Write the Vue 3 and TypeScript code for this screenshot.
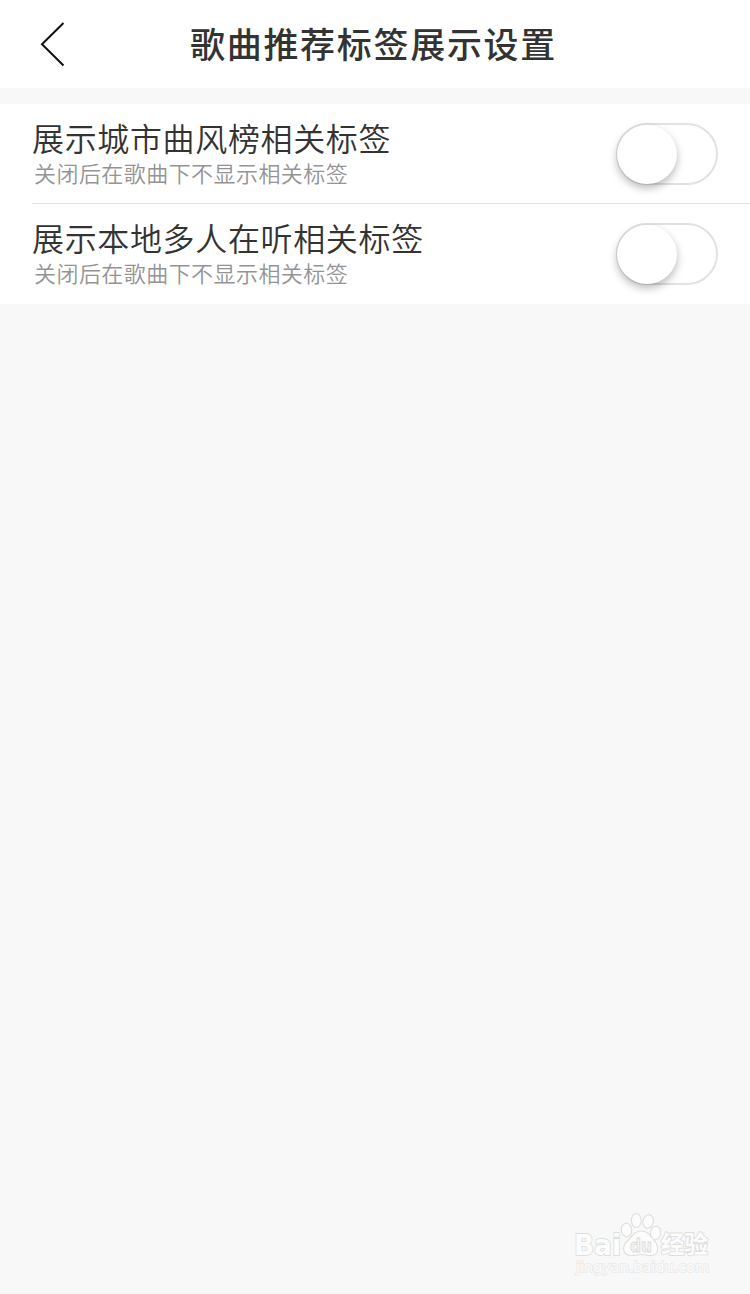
<script setup lang="ts">
import { ref } from 'vue'

interface Setting {
  title: string
  note: string
  enabled: boolean
}

const settings = ref<Setting[]>([
  { title: '展示城市曲风榜相关标签', note: '关闭后在歌曲下不显示相关标签', enabled: false },
  { title: '展示本地多人在听相关标签', note: '关闭后在歌曲下不显示相关标签', enabled: false },
])
</script>

<template>
  <main class="screen">
    <header class="bar">
      <button class="back" aria-label="返回">
        <svg width="26" height="46" viewBox="0 0 26 46">
          <path d="M24.500 2 L3 23.200 L24.500 44.500" fill="none" stroke="#111" stroke-width="2" />
        </svg>
      </button>
      <h1>歌曲推荐标签展示设置</h1>
    </header>

    <section class="list">
      <div v-for="item in settings" :key="item.title" class="row">
        <div class="copy">
          <p class="title">{{ item.title }}</p>
          <p class="note">{{ item.note }}</p>
        </div>
        <button
          class="switch"
          :class="{ on: item.enabled }"
          role="switch"
          :aria-checked="item.enabled"
          :aria-label="item.title"
          @click="item.enabled = !item.enabled"
        >
          <span class="knob"></span>
        </button>
      </div>
    </section>

    <svg class="watermark" width="150" height="74" viewBox="0 0 150 74">
      <g fill="#fcfcfc" stroke="#dedede" stroke-width="1.100">
        <ellipse cx="56.500" cy="20" rx="5.200" ry="6.800" transform="rotate(-6 56.500 20)" />
        <ellipse cx="66.300" cy="10.500" rx="4.900" ry="7" />
        <ellipse cx="78.200" cy="11.500" rx="5.200" ry="6.800" transform="rotate(12 78.200 11.500)" />
        <ellipse cx="85.500" cy="23" rx="5" ry="6.800" transform="rotate(6 85.500 23)" />
        <path d="M71 21 C64 21 62 27 57.500 31 C51 37 53 45.500 61 45.500 C65 45.500 68 44.500 71 44.500 C75 44.500 78 46 82 45.500 C89 44.500 89 36.500 85 31.500 C80 26.500 79 21 71 21 Z" />
      </g>
      <g fill="#fcfcfc" stroke="#dedede" stroke-width="1.800" paint-order="stroke">
        <text x="4" y="45" class="latin" font-size="29" textLength="47" lengthAdjust="spacingAndGlyphs">Bai</text>
        <text x="91" y="43" class="cjk" font-size="24" textLength="47" lengthAdjust="spacingAndGlyphs">经验</text>
      </g>
      <text x="60" y="42" class="latin du" textLength="22" lengthAdjust="spacingAndGlyphs">du</text>
      <text x="6" y="62" class="url" textLength="133" lengthAdjust="spacingAndGlyphs">jingyan.baidu.com</text>
    </svg>
  </main>
</template>

<style>
body {
  background: #f8f8f8;
}
</style>

<style scoped>
.screen {
  position: relative;
  min-height: 1294px;
  background: #f8f8f8;
  font-family: "Liberation Sans", "Noto Sans CJK SC", sans-serif;
  color: #333;
}

button {
  padding: 0;
  border: 0;
  background: none;
}

h1,
p {
  margin: 0;
  font-weight: 350;
  white-space: nowrap;
  font-family: "Noto Sans CJK SC", sans-serif;
}

.bar {
  display: grid;
  grid-template-columns: 190px 1fr;
  align-items: center;
  height: 88px;
  background: #fff;
}

.back {
  display: flex;
  margin-left: 39px;
  width: 26px;
}

h1 {
  padding-bottom: 2px;
  font-size: 35px;
  line-height: 50px;
  font-weight: 500;
  letter-spacing: 1.7px;
}

.list {
  margin-top: 16px;
  background: #fff;
}

.row {
  display: flex;
  justify-content: space-between;
  box-sizing: border-box;
  height: 100px;
  margin-left: 32px;
  padding: 13px 32px 0 0;
}

.row + .row {
  box-shadow: 0 -1px 0 #e2e2e2;
}

.title {
  font-size: 32px;
  line-height: 40px;
  letter-spacing: 0.65px;
}

.note {
  margin-left: 2px;
  font-size: 22px;
  line-height: 30px;
  letter-spacing: 0.44px;
  color: #949494;
}

.switch {
  display: flex;
  box-sizing: border-box;
  width: 102px;
  height: 62px;
  margin-top: 6px;
  border: 2px solid #e2e2e2;
  border-radius: 31px;
}

.switch.on {
  justify-content: flex-end;
}

.knob {
  width: 60px;
  height: 59px;
  margin-left: -1px;
  border-radius: 50%;
  background: #fff;
  box-shadow: 0 4px 9px rgba(0, 0, 0, 0.28);
}

.watermark {
  position: absolute;
  left: 570px;
  top: 1210px;
}

.latin {
  font-family: "DejaVu Sans", sans-serif;
  font-weight: 700;
}

.du {
  font-size: 18px;
  fill: #f4f4f4;
  stroke: #dadada;
  stroke-width: 0.9px;
}

.cjk {
  font-family: "Noto Sans CJK SC", sans-serif;
  font-weight: 700;
}

.url {
  font-family: "DejaVu Sans", sans-serif;
  font-size: 14.5px;
  fill: #fcfcfc;
  stroke: #e8e8e8;
  stroke-width: 1.6px;
  paint-order: stroke;
}
</style>
